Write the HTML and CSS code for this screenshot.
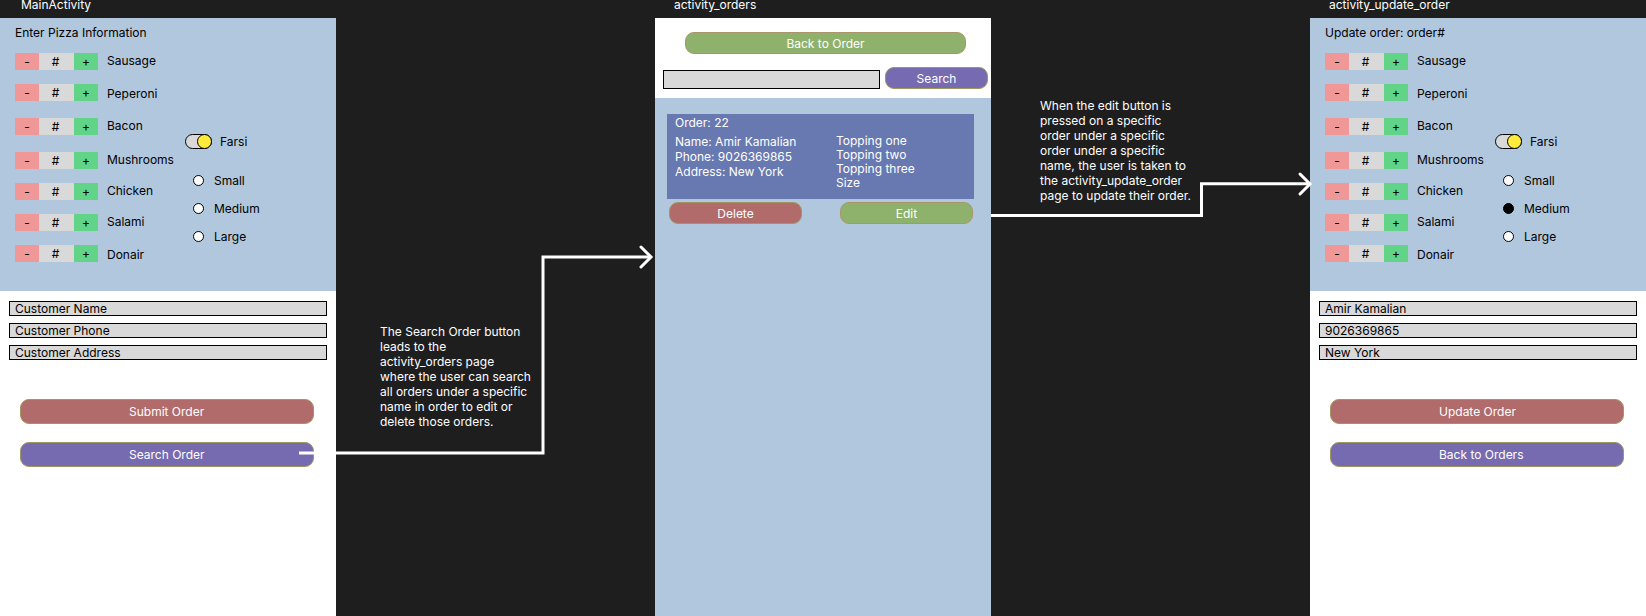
FILE: index.html
```html
<!DOCTYPE html>
<html lang="en">
<head>
<meta charset="utf-8">
<title>Pizza order screens</title>
<link rel="stylesheet" href="styles.css">
</head>
<body>
<main class="board">
  <section class="screen">
    <h2 class="screen-name">MainActivity</h2>
    <div class="frame">
      <div class="panel">
        <h3 class="panel-title">Enter Pizza Information</h3>
        <div class="panel-body">
          <ul class="toppings">
            <li class="topping"><button class="step minus">-</button><output class="count">#</output><button class="step plus">+</button><span class="topping-name">Sausage</span></li>
            <li class="topping low"><button class="step minus">-</button><output class="count">#</output><button class="step plus">+</button><span class="topping-name">Peperoni</span></li>
            <li class="topping spaced"><button class="step minus">-</button><output class="count">#</output><button class="step plus">+</button><span class="topping-name">Bacon</span></li>
            <li class="topping spaced"><button class="step minus">-</button><output class="count">#</output><button class="step plus">+</button><span class="topping-name">Mushrooms</span></li>
            <li class="topping"><button class="step minus">-</button><output class="count">#</output><button class="step plus">+</button><span class="topping-name">Chicken</span></li>
            <li class="topping"><button class="step minus">-</button><output class="count">#</output><button class="step plus">+</button><span class="topping-name">Salami</span></li>
            <li class="topping low"><button class="step minus">-</button><output class="count">#</output><button class="step plus">+</button><span class="topping-name">Donair</span></li>
          </ul>
          <div class="options">
            <label class="switch-row"><input class="switch" type="checkbox" checked>Farsi</label>
            <div class="sizes">
              <label class="size"><input class="radio" type="radio" name="size-new">Small</label>
              <label class="size"><input class="radio" type="radio" name="size-new">Medium</label>
              <label class="size"><input class="radio" type="radio" name="size-new">Large</label>
            </div>
          </div>
        </div>
      </div>
      <form class="customer">
        <input class="field" type="text" placeholder="Customer Name" aria-label="Customer Name">
        <input class="field" type="text" placeholder="Customer Phone" aria-label="Customer Phone">
        <input class="field" type="text" placeholder="Customer Address" aria-label="Customer Address">
      </form>
      <div class="actions">
        <button class="button wide red">Submit Order</button>
        <button class="button wide purple">Search Order</button>
      </div>
    </div>
  </section>

  <div class="link link-search">
    <p class="note">The Search Order button<br>leads to the<br>activity_orders page<br>where the user can search<br>all orders under a specific<br>name in order to edit or<br>delete those orders.</p>
    <svg class="line" viewBox="0 0 319 616" preserveAspectRatio="none" aria-hidden="true"><path d="M-37 453H207V257H314"/></svg>
    <svg class="head head-search" viewBox="0 0 16 26" aria-hidden="true"><path d="M3 3L13 13L3 23"/></svg>
  </div>

  <section class="screen">
    <h2 class="screen-name">activity_orders</h2>
    <div class="frame">
      <div class="order-tools">
        <button class="button back green">Back to Order</button>
        <div class="search-row">
          <input class="field search-field" type="search" aria-label="Search orders">
          <button class="button search-button purple">Search</button>
        </div>
      </div>
      <div class="orders">
        <article class="order">
          <h3 class="order-title">Order: 22</h3>
          <div class="order-details">
            <div class="order-person"><p>Name: Amir Kamalian</p><p>Phone: 9026369865</p><p>Address: New York</p></div>
            <div class="order-items"><p>Topping one</p><p>Topping two</p><p>Topping three</p><p>Size</p></div>
          </div>
        </article>
        <div class="order-actions">
          <button class="button small red">Delete</button>
          <button class="button small green">Edit</button>
        </div>
      </div>
    </div>
  </section>

  <div class="link link-edit">
    <p class="note">When the edit button is<br>pressed on a specific<br>order under a specific<br>order under a specific<br>name, the user is taken to<br>the activity_update_order<br>page to update their order.</p>
    <svg class="line" viewBox="0 0 319 616" preserveAspectRatio="none" aria-hidden="true"><path d="M0 215.5H210.5V183.7H318"/></svg>
    <svg class="head head-edit" viewBox="0 0 16 26" aria-hidden="true"><path d="M3 3L13 13L3 23"/></svg>
  </div>

  <section class="screen">
    <h2 class="screen-name">activity_update_order</h2>
    <div class="frame">
      <div class="panel">
        <h3 class="panel-title">Update order: order#</h3>
        <div class="panel-body">
          <ul class="toppings">
            <li class="topping"><button class="step minus">-</button><output class="count">#</output><button class="step plus">+</button><span class="topping-name">Sausage</span></li>
            <li class="topping low"><button class="step minus">-</button><output class="count">#</output><button class="step plus">+</button><span class="topping-name">Peperoni</span></li>
            <li class="topping spaced"><button class="step minus">-</button><output class="count">#</output><button class="step plus">+</button><span class="topping-name">Bacon</span></li>
            <li class="topping spaced"><button class="step minus">-</button><output class="count">#</output><button class="step plus">+</button><span class="topping-name">Mushrooms</span></li>
            <li class="topping"><button class="step minus">-</button><output class="count">#</output><button class="step plus">+</button><span class="topping-name">Chicken</span></li>
            <li class="topping"><button class="step minus">-</button><output class="count">#</output><button class="step plus">+</button><span class="topping-name">Salami</span></li>
            <li class="topping low"><button class="step minus">-</button><output class="count">#</output><button class="step plus">+</button><span class="topping-name">Donair</span></li>
          </ul>
          <div class="options">
            <label class="switch-row"><input class="switch" type="checkbox" checked>Farsi</label>
            <div class="sizes">
              <label class="size"><input class="radio" type="radio" name="size-edit">Small</label>
              <label class="size"><input class="radio" type="radio" name="size-edit" checked>Medium</label>
              <label class="size"><input class="radio" type="radio" name="size-edit">Large</label>
            </div>
          </div>
        </div>
      </div>
      <form class="customer">
        <input class="field" type="text" value="Amir Kamalian" aria-label="Customer Name">
        <input class="field" type="text" value="9026369865" aria-label="Customer Phone">
        <input class="field" type="text" value="New York" aria-label="Customer Address">
      </form>
      <div class="actions">
        <button class="button wide red">Update Order</button>
        <button class="button wide purple">Back to Orders</button>
      </div>
    </div>
  </section>
</main>
</body>
</html>
```

FILE: styles.css
```css
*, *::before, *::after { box-sizing: border-box; }

body {
  margin: 0;
  background: #1e1e1e;
  color: #000;
  font: 400 12px/15px Inter, "Liberation Sans", sans-serif;
}

h2, h3, p, ul { margin: 0; padding: 0; font: inherit; }
button, input { margin: 0; padding: 0; border: 0; font: inherit; color: inherit; }

.board {
  display: grid;
  grid-template-columns: 336fr 319fr 336fr 319fr 336fr;
  min-height: 100vh;
  overflow: hidden;
}

.screen { display: flex; flex-direction: column; min-width: 0; }
.screen-name { padding: 0 18px 8px 21px; line-height: 10px; color: #fff; }
.screen + .link + .screen .screen-name { padding-left: 19px; }
.frame { flex: 1; display: flex; flex-direction: column; background: #fff; }

/* Pizza panel */
.panel { padding: 7px 15px 29px; background: #b1c7dd; }
.panel-body { display: flex; margin-top: 13px; }
.toppings { display: flex; flex-direction: column; gap: 14px; width: 170px; list-style: none; }
.topping { display: flex; height: 17px; line-height: 17px; }
.spaced { margin-top: 3px; }
.step { width: 24px; text-align: center; }
.minus { background: #f09797; }
.plus { background: #62d488; }
.count { width: 35px; padding-right: 2px; text-align: center; background: #d9d9d9; }
.topping-name { margin-left: 9px; line-height: 15px; }
.low .topping-name { line-height: 19px; }

.options { padding-top: 81px; }
.switch-row { display: flex; align-items: center; gap: 8px; }
.switch {
  appearance: none;
  display: flex;
  justify-content: flex-end;
  width: 27px;
  height: 15px;
  border: 1px solid #000;
  border-radius: 8px;
  background: #d9d9d9;
}
.switch::before {
  content: "";
  width: 15px;
  height: 15px;
  margin: -1px;
  border: 1px solid #000;
  border-radius: 50%;
  background: #ffeb3b;
}
.sizes { display: flex; flex-direction: column; gap: 13px; margin-top: 24px; padding-left: 8px; }
.size { display: flex; align-items: center; gap: 10px; }
.radio {
  appearance: none;
  width: 11px;
  height: 11px;
  border: 1px solid #000;
  border-radius: 50%;
  background: #fff;
}
.radio:checked { background: #000; }

/* Customer form */
.customer { display: flex; flex-direction: column; gap: 7px; padding: 10px 9px 0; }
.field {
  width: 100%;
  height: 15px;
  padding: 0 5px;
  border: 1px solid #000;
  border-radius: 0;
  background: #d9d9d9;
  line-height: 13px;
}
.field::placeholder { color: #000; opacity: 1; }

/* Buttons */
.actions { display: flex; flex-direction: column; gap: 18px; padding: 39px 22px 0 20px; }
.button { height: 22px; border: 1px solid #a0965f; border-radius: 9px; color: #fff; }
.wide { height: 25px; padding-left: 108px; text-align: left; }
.red { background: #b26b6b; }
.purple { background: #766bb0; }
.green { background: #8eb16c; border-color: #ab966c; }

/* Orders screen */
.order-tools { display: flex; flex-direction: column; gap: 13px; padding: 14px 3px 9px 8px; }
.back { margin: 0 22px; }
.search-row { display: flex; align-items: flex-end; gap: 5px; }
.search-field { flex: 1; min-width: 0; height: 19px; appearance: none; }
.search-button { width: 103px; }
.orders { flex: 1; padding: 16px 17px 0 12px; background: #b1c7dd; }
.order { padding: 1px 8px 9px; background: #6878b0; color: #fff; }
.order-details { display: grid; grid-template-columns: 161fr 130fr; margin-top: 4px; }
.order-items { line-height: 14px; }
.order-actions { display: flex; justify-content: space-between; padding: 3px 1px 0 2px; }
.small { width: 133px; }

/* Notes and arrows between screens */
.link { position: relative; color: #fff; }
.link-search { padding: 324px 0 0 44px; }
.link-edit { padding: 98px 0 0 49px; }
.note { white-space: nowrap; }
.line, .head { position: absolute; overflow: visible; fill: none; stroke: #fff; stroke-width: 3; pointer-events: none; }
.line { top: 0; left: 0; width: 100%; height: 616px; }
.line path { vector-effect: non-scaling-stroke; }
.head { width: 16px; height: 26px; stroke-linecap: round; }
.head-search { top: 244px; right: 1px; }
.head-edit { top: 171px; right: -3px; }
```
